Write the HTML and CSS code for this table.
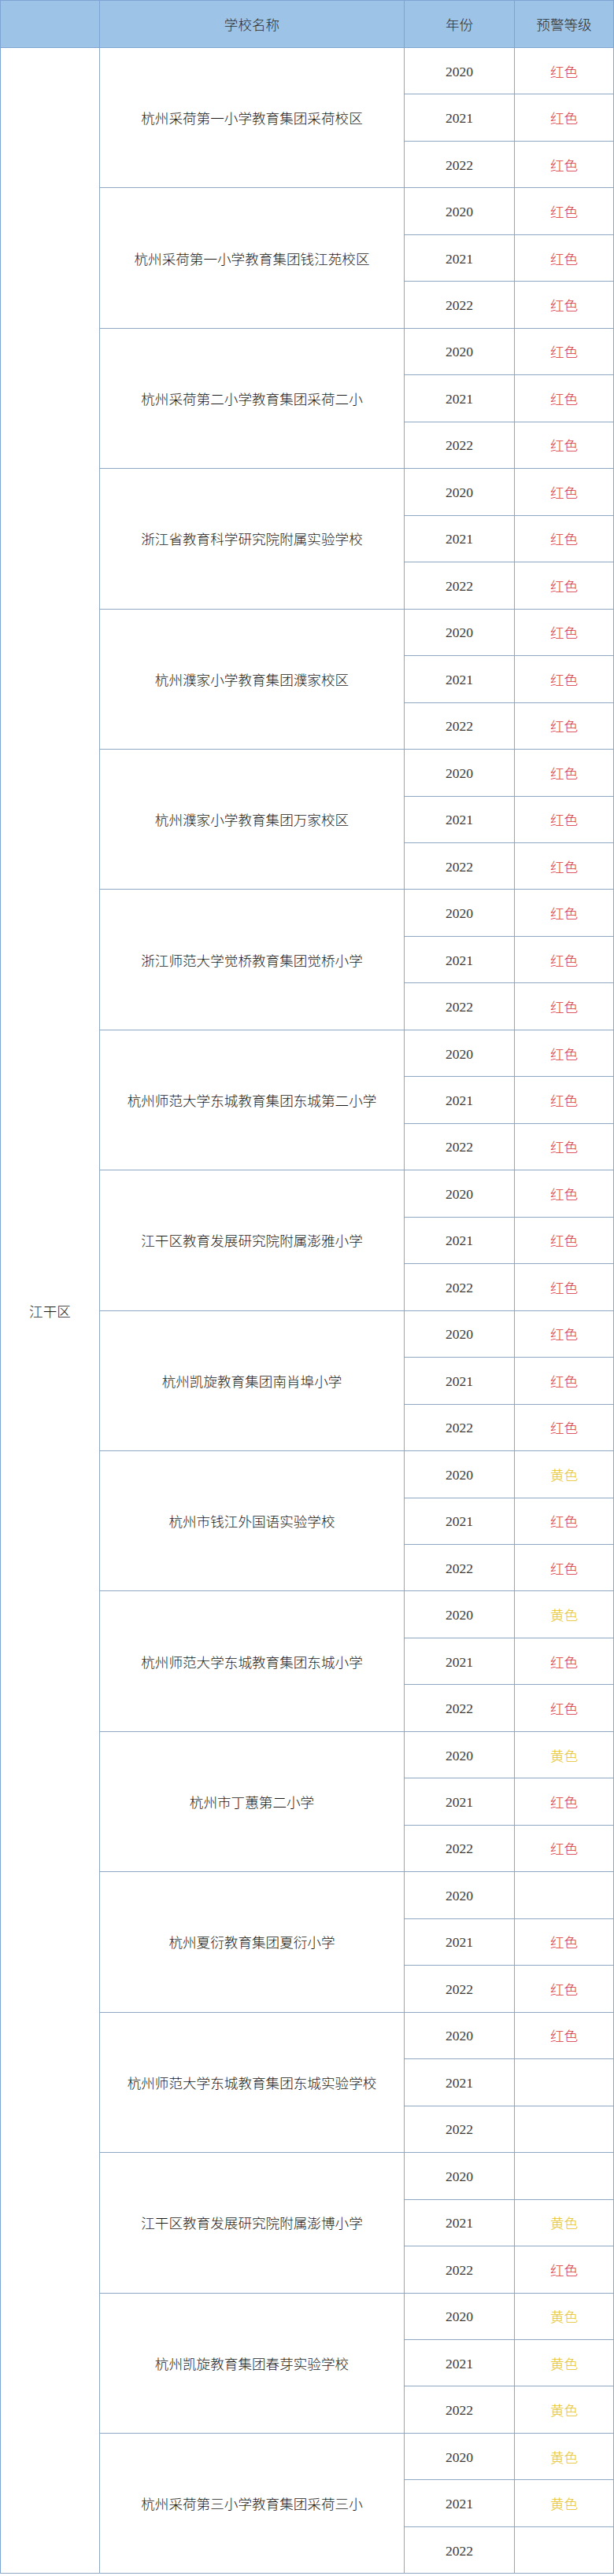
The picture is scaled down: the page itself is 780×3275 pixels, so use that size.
FILE: index.html
```html
<!DOCTYPE html>
<html lang="zh-CN">
<head>
<meta charset="utf-8">
<title>江干区预警学校</title>
<link rel="stylesheet" href="styles.css">
</head>
<body>
<table class="sheet">
<colgroup><col class="c-area"><col class="c-name"><col class="c-year"><col class="c-level"></colgroup>
<thead>
<tr class="head"><th></th><th>学校名称</th><th>年份</th><th>预警等级</th></tr>
</thead>
<tbody>
<tr><td class="area" rowspan="54">江干区</td><td class="name" rowspan="3">杭州采荷第一小学教育集团采荷校区</td><td class="year">2020</td><td class="red">红色</td></tr>
<tr><td class="year">2021</td><td class="red">红色</td></tr>
<tr><td class="year">2022</td><td class="red">红色</td></tr>
<tr><td class="name" rowspan="3">杭州采荷第一小学教育集团钱江苑校区</td><td class="year">2020</td><td class="red">红色</td></tr>
<tr><td class="year">2021</td><td class="red">红色</td></tr>
<tr><td class="year">2022</td><td class="red">红色</td></tr>
<tr><td class="name" rowspan="3">杭州采荷第二小学教育集团采荷二小</td><td class="year">2020</td><td class="red">红色</td></tr>
<tr><td class="year">2021</td><td class="red">红色</td></tr>
<tr><td class="year">2022</td><td class="red">红色</td></tr>
<tr><td class="name" rowspan="3">浙江省教育科学研究院附属实验学校</td><td class="year">2020</td><td class="red">红色</td></tr>
<tr><td class="year">2021</td><td class="red">红色</td></tr>
<tr><td class="year">2022</td><td class="red">红色</td></tr>
<tr><td class="name" rowspan="3">杭州濮家小学教育集团濮家校区</td><td class="year">2020</td><td class="red">红色</td></tr>
<tr><td class="year">2021</td><td class="red">红色</td></tr>
<tr><td class="year">2022</td><td class="red">红色</td></tr>
<tr><td class="name" rowspan="3">杭州濮家小学教育集团万家校区</td><td class="year">2020</td><td class="red">红色</td></tr>
<tr><td class="year">2021</td><td class="red">红色</td></tr>
<tr><td class="year">2022</td><td class="red">红色</td></tr>
<tr><td class="name" rowspan="3">浙江师范大学觉桥教育集团觉桥小学</td><td class="year">2020</td><td class="red">红色</td></tr>
<tr><td class="year">2021</td><td class="red">红色</td></tr>
<tr><td class="year">2022</td><td class="red">红色</td></tr>
<tr><td class="name" rowspan="3">杭州师范大学东城教育集团东城第二小学</td><td class="year">2020</td><td class="red">红色</td></tr>
<tr><td class="year">2021</td><td class="red">红色</td></tr>
<tr><td class="year">2022</td><td class="red">红色</td></tr>
<tr><td class="name" rowspan="3">江干区教育发展研究院附属澎雅小学</td><td class="year">2020</td><td class="red">红色</td></tr>
<tr><td class="year">2021</td><td class="red">红色</td></tr>
<tr><td class="year">2022</td><td class="red">红色</td></tr>
<tr><td class="name" rowspan="3">杭州凯旋教育集团南肖埠小学</td><td class="year">2020</td><td class="red">红色</td></tr>
<tr><td class="year">2021</td><td class="red">红色</td></tr>
<tr><td class="year">2022</td><td class="red">红色</td></tr>
<tr><td class="name" rowspan="3">杭州市钱江外国语实验学校</td><td class="year">2020</td><td class="yellow">黄色</td></tr>
<tr><td class="year">2021</td><td class="red">红色</td></tr>
<tr><td class="year">2022</td><td class="red">红色</td></tr>
<tr><td class="name" rowspan="3">杭州师范大学东城教育集团东城小学</td><td class="year">2020</td><td class="yellow">黄色</td></tr>
<tr><td class="year">2021</td><td class="red">红色</td></tr>
<tr><td class="year">2022</td><td class="red">红色</td></tr>
<tr><td class="name" rowspan="3">杭州市丁蕙第二小学</td><td class="year">2020</td><td class="yellow">黄色</td></tr>
<tr><td class="year">2021</td><td class="red">红色</td></tr>
<tr><td class="year">2022</td><td class="red">红色</td></tr>
<tr><td class="name" rowspan="3">杭州夏衍教育集团夏衍小学</td><td class="year">2020</td><td class="red"></td></tr>
<tr><td class="year">2021</td><td class="red">红色</td></tr>
<tr><td class="year">2022</td><td class="red">红色</td></tr>
<tr><td class="name" rowspan="3">杭州师范大学东城教育集团东城实验学校</td><td class="year">2020</td><td class="red">红色</td></tr>
<tr><td class="year">2021</td><td class="red"></td></tr>
<tr><td class="year">2022</td><td class="red"></td></tr>
<tr><td class="name" rowspan="3">江干区教育发展研究院附属澎博小学</td><td class="year">2020</td><td class="red"></td></tr>
<tr><td class="year">2021</td><td class="yellow">黄色</td></tr>
<tr><td class="year">2022</td><td class="red">红色</td></tr>
<tr><td class="name" rowspan="3">杭州凯旋教育集团春芽实验学校</td><td class="year">2020</td><td class="yellow">黄色</td></tr>
<tr><td class="year">2021</td><td class="yellow">黄色</td></tr>
<tr><td class="year">2022</td><td class="yellow">黄色</td></tr>
<tr><td class="name" rowspan="3">杭州采荷第三小学教育集团采荷三小</td><td class="year">2020</td><td class="yellow">黄色</td></tr>
<tr><td class="year">2021</td><td class="yellow">黄色</td></tr>
<tr><td class="year">2022</td><td class="red"></td></tr>
</tbody>
</table>
</body>
</html>
```
FILE: styles.css
```css
html, body {
  margin: 0;
  padding: 0;
  background: #ffffff;
}

.sheet {
  border-collapse: collapse;
  table-layout: fixed;
  width: 779px;
  font-family: "Liberation Serif", "Noto Sans CJK SC", serif;
  font-size: 17.6px;
  color: #3a3a3a;
}

.c-area { width: 126px; }
.c-name { width: 387px; }
.c-year { width: 140px; }
.c-level { width: 126px; }

.sheet th,
.sheet td {
  border: 1px solid #8ea8c4;
  padding: 0;
  text-align: center;
  vertical-align: middle;
  font-weight: 400;
  line-height: 1.2;
}

.sheet .head th {
  height: 59px;
  background: #9dc3e6;
  border-color: #7ea4d3;
  color: #2e2e2e;
  font-family: "Noto Sans CJK SC", sans-serif;
  font-weight: 300;
}

.sheet tbody tr {
  height: 59.48px;
}

.sheet .area,
.sheet .name {
  font-family: "Noto Sans CJK SC", sans-serif;
  font-weight: 300;
  color: #1a1a1a;
}

.sheet .area {
  border-left-color: #7ea4d3;
}

.sheet .year {
  padding-top: 2px;
}

.sheet .red,
.sheet .yellow {
  font-family: "Noto Sans CJK SC", sans-serif;
  font-weight: 300;
}

.sheet .red { color: #d6323f; }
.sheet .yellow { color: #e6c229; }
```
